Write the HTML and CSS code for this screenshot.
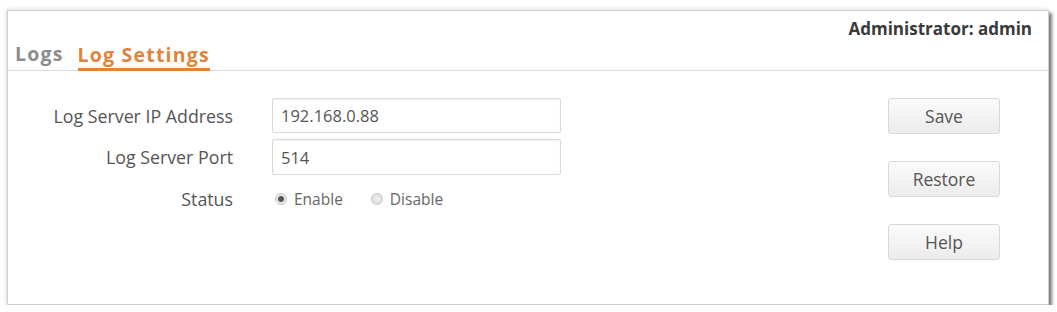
FILE: index.html
```html
<!DOCTYPE html>
<html>
<head>
<meta charset="utf-8">
<link rel="stylesheet" href="styles.css">
</head>
<body>
<div class="panel">
  <div class="header">
    <div class="tabs">
      <span class="tab">Logs</span>
      <span class="tab active">Log Settings</span>
    </div>
    <div class="admin">Administrator: admin</div>
  </div>
  <div class="content">
    <div class="form">
      <div class="row">
        <label class="label">Log Server IP Address</label>
        <div class="input input-ip">192.168.0.88</div>
      </div>
      <div class="row">
        <label class="label">Log Server Port</label>
        <div class="input input-port">514</div>
      </div>
      <div class="row row-status">
        <label class="label">Status</label>
        <div class="radios">
          <span class="radio"><span class="dot checked"></span>Enable</span>
          <span class="radio"><span class="dot"></span>Disable</span>
        </div>
      </div>
    </div>
    <div class="buttons">
      <button class="btn">Save</button>
      <button class="btn">Restore</button>
      <button class="btn">Help</button>
    </div>
  </div>
</div>
</body>
</html>
```
FILE: styles.css
```css
html, body {
  margin: 0;
  padding: 0;
  background: #ffffff;
}
body {
  font-family: "Open Sans", "Noto Sans", sans-serif;
  color: #555;
}
.panel {
  margin: 10px 0 0 7px;
  width: 1042px;
  height: 295px;
  box-sizing: border-box;
  border: 1px solid #d0d0d0;
  background: #fff;
  box-shadow: 3px 3px 3px rgba(0,0,0,0.5), -1px -1px 4px rgba(0,0,0,0.14);
  display: flex;
  flex-direction: column;
}
.header {
  height: 60px;
  border-bottom: 1px solid #dcdcdc;
  display: flex;
  justify-content: space-between;
  box-sizing: border-box;
}
.tabs {
  display: flex;
  align-items: flex-end;
  gap: 14px;
  padding-left: 7px;
}
.tab {
  font-weight: bold;
  font-size: 19.5px;
  color: #8c8c8c;
  line-height: 22px;
  padding-bottom: 5px;
  letter-spacing: 1.2px;
}
.tab.active {
  color: #e0843c;
  border-bottom: 3px solid #e0843c;
  padding-bottom: 2px;
  margin-bottom: -1px;
}
.admin {
  font-weight: bold;
  font-size: 17px;
  color: #3a3a3a;
  padding: 8px 16px 0 0;
  line-height: 20px;
}
.content {
  display: flex;
  justify-content: space-between;
  padding-top: 27px;
}
.form {
  display: flex;
  flex-direction: column;
  gap: 6px;
}
.row {
  display: flex;
  align-items: center;
  gap: 39px;
}
.label {
  width: 225px;
  text-align: right;
  font-size: 17.8px;
  color: #555;
}
.input {
  width: 289px;
  height: 35px;
  box-sizing: border-box;
  border: 1px solid #dadada;
  border-radius: 2px;
  box-shadow: inset 0 1px 2px rgba(0,0,0,0.06);
  font-size: 16.5px;
  color: #555;
  padding-left: 8px;
  display: flex;
  align-items: center;
}
.input-port {
  height: 36px;
}
.row-status {
  margin-top: 6px;
  height: 24px;
}
.radios {
  display: flex;
  gap: 28px;
  font-size: 15.5px;
  color: #666;
  padding-left: 3px;
}
.radio {
  display: flex;
  align-items: center;
  gap: 7px;
}
.dot {
  width: 12px;
  height: 12px;
  border-radius: 50%;
  box-sizing: border-box;
  border: 1px solid #c8c8c8;
  background: radial-gradient(circle, #f0f0f0 0, #d8d8d8 100%);
  display: inline-block;
}
.dot.checked {
  background: radial-gradient(circle, #555 0, #555 2.5px, #e6e6e6 3.5px);
}
.buttons {
  display: flex;
  flex-direction: column;
  gap: 27px;
  margin-right: 48px;
}
.btn {
  width: 112px;
  height: 36px;
  border: 1px solid #d8d8d8;
  border-radius: 3px;
  background: linear-gradient(#fbfbfb, #ececec);
  font-family: "Open Sans", "Noto Sans", sans-serif;
  font-size: 17.5px;
  color: #555;
  padding: 0;
}
```
